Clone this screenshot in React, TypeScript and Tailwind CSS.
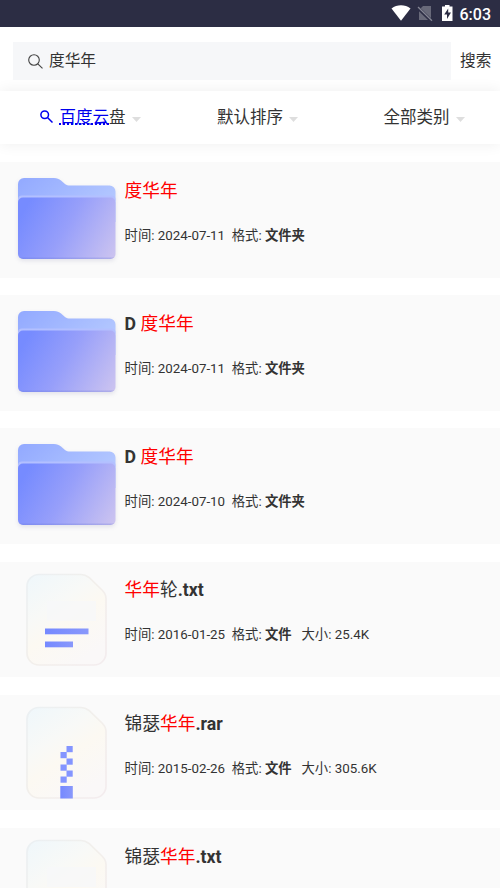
import type { ReactNode } from "react";

type Kind = "folder" | "txt" | "rar";

interface Result {
  kind: Kind;
  title: ReactNode;
  date?: string;
  size?: string;
}

const Hit = ({ children }: { children: ReactNode }) => (
  <span className="font-normal text-[#ff0000]">{children}</span>
);

const Plain = ({ children }: { children: ReactNode }) => (
  <span className="font-normal">{children}</span>
);

const results: Result[] = [
  { kind: "folder", title: <Hit>度华年</Hit>, date: "2024-07-11" },
  { kind: "folder", title: <>D <Hit>度华年</Hit></>, date: "2024-07-11" },
  { kind: "folder", title: <>D <Hit>度华年</Hit></>, date: "2024-07-10" },
  { kind: "txt", title: <><Hit>华年</Hit><Plain>轮</Plain>.txt</>, date: "2016-01-25", size: "25.4K" },
  { kind: "rar", title: <><Plain>锦瑟</Plain><Hit>华年</Hit>.rar</>, date: "2015-02-26", size: "305.6K" },
  { kind: "txt", title: <><Plain>锦瑟</Plain><Hit>华年</Hit>.txt</> },
];

function Gradients() {
  return (
    <svg className="absolute h-0 w-0" aria-hidden="true">
      <defs>
        <linearGradient id="folderBack" x1="0" y1="0" x2="1" y2="0.5">
          <stop offset="0" stopColor="#92a9ff" />
          <stop offset="1" stopColor="#b4c8ff" />
        </linearGradient>
        <linearGradient id="folderFront" gradientUnits="userSpaceOnUse" x1="24" y1="48" x2="112" y2="98">
          <stop offset="0" stopColor="#768bff" />
          <stop offset="0.45" stopColor="#979ffa" />
          <stop offset="1" stopColor="#cbc3f0" />
        </linearGradient>
        <linearGradient id="folderEdge" x1="0" y1="0" x2="0" y2="1">
          <stop offset="0.96" stopColor="#6674d8" stopOpacity="0" />
          <stop offset="1" stopColor="#6674d8" stopOpacity="0.35" />
        </linearGradient>
        <linearGradient id="paper" x1="0" y1="0" x2="0.6" y2="1">
          <stop offset="0" stopColor="#eff7fb" />
          <stop offset="0.4" stopColor="#f8f9f7" />
          <stop offset="0.62" stopColor="#fcf9f2" />
          <stop offset="1" stopColor="#faf8f8" />
        </linearGradient>
        <linearGradient id="paperEdge" x1="0" y1="0" x2="1" y2="1">
          <stop offset="0" stopColor="#ebf0f3" />
          <stop offset="0.5" stopColor="#f2efeb" />
          <stop offset="1" stopColor="#f3ecee" />
        </linearGradient>
        <linearGradient id="bar" x1="0" y1="0" x2="1" y2="0">
          <stop offset="0" stopColor="#7589ff" />
          <stop offset="1" stopColor="#8998fb" />
        </linearGradient>
      </defs>
    </svg>
  );
}

function FolderIcon() {
  return (
    <svg className="block h-[115px] w-[125px] drop-shadow-[0_2px_2px_rgba(60,60,120,0.12)]" viewBox="0 0 125 115">
      <path
        d="M18 22a6 6 0 0 1 6-6h30c3 0 5 1 7 2.500l4 3.500c1.500 1 3 1.500 5 1.500h39.500a6 6 0 0 1 6 6V60H18Z"
        fill="url(#folderBack)"
      />
      <rect x="18" y="33.500" width="97.500" height="8" rx="4" fill="#b3c0ff" />
      <rect x="18" y="35.500" width="97.500" height="61.500" rx="5" fill="url(#folderFront)" />
      <rect x="18" y="35.500" width="97.500" height="61.500" rx="5" fill="url(#folderEdge)" />
    </svg>
  );
}

const zipTeeth = [
  [66.500, 51],
  [60.500, 57],
  [66.500, 63.500],
  [60.500, 69.500],
  [66.500, 75.500],
  [60.500, 81.500],
];

function FileIcon({ kind }: { kind: Kind }) {
  return (
    <svg className="block h-[115px] w-[125px]" viewBox="0 0 125 115">
      <path
        d="M40 12.500h41c3.500 0 5.500 1 8 3l13 12.500c2.500 2.500 4 5 4 8.500V91a12 12 0 0 1-12 12H39a12 12 0 0 1-12-12V25a12 12 0 0 1 12-12.500Z"
        fill="url(#paper)"
        stroke="url(#paperEdge)"
        strokeWidth="1.700"
      />
      {kind === "txt" ? (
        <>
          <rect x="47" y="39" width="49" height="20" fill="#f7f8fa" opacity="0.7" />
          <g fill="url(#bar)">
            <rect x="45" y="66.500" width="43.500" height="5.800" />
            <rect x="45" y="79.500" width="28" height="5.800" />
          </g>
        </>
      ) : (
        <>
          {zipTeeth.map(([x, y]) => (
            <rect key={y} x={x} y={y} width="6.200" height="6.200" fill="#8495ff" />
          ))}
          <rect x="60.300" y="91" width="12.500" height="12.500" fill="url(#bar)" />
        </>
      )}
    </svg>
  );
}

function StatusBar() {
  return (
    <div className="flex h-[27px] items-center justify-end bg-[#2c2d44] pr-[9px] text-white">
      <svg className="h-[27px] w-[66px]" viewBox="390 0 66 27">
        <path d="M391.500 8.500C397 4.300 405 4.300 410.500 8.500L401 20.800Z" fill="#fff" />
        <path d="M423 6h8v14h-12V10Z" fill="#686979" />
        <path d="M417.500 7.500 431.500 21" stroke="#2c2d44" strokeWidth="3.200" />
        <path d="M418 7 432 20.800" stroke="#858694" strokeWidth="1.300" />
        <path d="M445 5h4.500v1.500h3V21h-10.500V6.500h3Z" fill="#fff" />
        <path d="m448.200 8.500-4 6h2.800v4.500l4-6.500h-2.800Z" fill="#2c2d44" />
      </svg>
      <span className="ml-1 pt-[2px] font-[Roboto] text-[16px] font-medium leading-none">6:03</span>
    </div>
  );
}

const Caret = () => (
  <svg className="ml-[6px] mt-[2px] h-[5px] w-[9px]" viewBox="0 0 9 5">
    <path d="M0 0h9L4.500 5Z" fill="#dedede" />
  </svg>
);

function SearchBar() {
  return (
    <div className="flex h-[64px] items-center bg-white pl-[13px] pt-[4px]">
      <div className="flex h-[38px] w-[438px] items-center bg-[#f6f7f9] pl-[15px]">
        <svg className="h-[15px] w-[15px]" viewBox="0 0 15 15" fill="none" stroke="#444" strokeWidth="1.100">
          <circle cx="6" cy="6" r="5.300" />
          <path d="m9.800 9.800 4.700 4.600" />
        </svg>
        <span className="ml-[6px] text-[15.700px]">度华年</span>
      </div>
      <span className="ml-[9px] text-[15.700px]">搜索</span>
    </div>
  );
}

function Filters() {
  return (
    <div className="flex h-[53px] items-center justify-between bg-white pl-[40px] pr-[35.500px] pt-px text-[16.500px] shadow-[0_0_14px_rgba(0,0,0,0.07)]">
      <div className="flex items-center">
        <svg className="mb-[3px] mr-[6.500px] h-[13px] w-[13px]" viewBox="0 0 13 13" fill="none" stroke="#0000ee" strokeWidth="1.500">
          <circle cx="4.700" cy="4.700" r="3.800" />
          <path d="m7.500 7.500 5 5" />
        </svg>
        <span>
          <span className="text-[#0000ee] underline decoration-[#0000ee] decoration-dotted decoration-[1.500px] underline-offset-[1px]">
            百度云
          </span>
          盘
        </span>
        <Caret />
      </div>
      <div className="-ml-[9px] flex items-center">
        默认排序
        <Caret />
      </div>
      <div className="flex items-center">
        全部类别
        <Caret />
      </div>
    </div>
  );
}

function ResultCard({ item }: { item: Result }) {
  return (
    <div className="flex h-[115.500px] shrink-0 bg-[#fafafa]">
      {item.kind === "folder" ? <FolderIcon /> : <FileIcon kind={item.kind} />}
      <div className="-ml-[0.400px] pt-[16.800px]">
        <h3 className="text-[17.700px] font-bold leading-[24px]">{item.title}</h3>
        {item.date && (
          <p className="mt-[23.100px] whitespace-pre text-[13.330px] leading-[20px]">
            时间: {item.date}  格式: <b>{item.kind === "folder" ? "文件夹" : "文件"}</b>
            {item.size && `   大小: ${item.size}`}
          </p>
        )}
      </div>
    </div>
  );
}

export default function App() {
  return (
    <div className="h-[888px] w-[500px] overflow-hidden bg-white font-[Roboto,'Noto_Sans_CJK_SC',sans-serif] text-[#333]">
      <Gradients />
      <StatusBar />
      <SearchBar />
      <Filters />
      <div className="mt-[18px] flex flex-col gap-[17.700px]">
        {results.map((item, i) => (
          <ResultCard key={i} item={item} />
        ))}
      </div>
    </div>
  );
}
